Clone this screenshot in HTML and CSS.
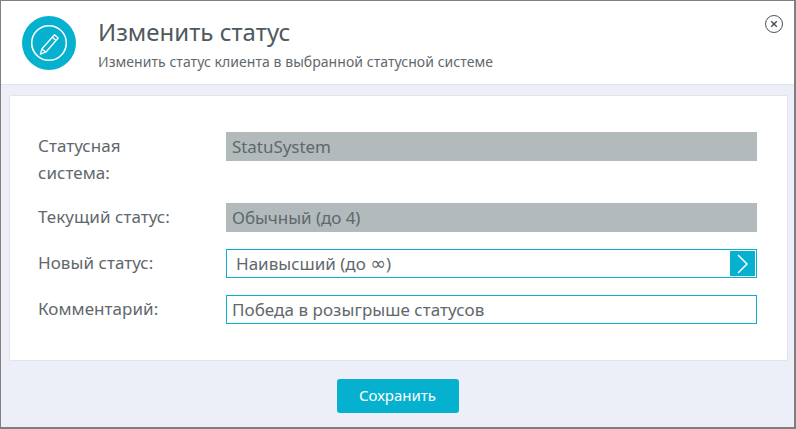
FILE: index.html
```html
<!DOCTYPE html>
<html lang="ru">
<head>
<meta charset="utf-8">
<title>Изменить статус</title>
<link rel="stylesheet" href="styles.css">
</head>
<body>
<div class="dialog">
  <header class="head">
    <div class="logo">
      <svg width="54" height="54" viewBox="0 0 54 54" fill="none" stroke="#fff">
        <circle cx="27" cy="27" r="17.3" stroke-width="1.6"/>
        <path d="M32.500 18.800l3.700 3.200-12.200 14-5.600 2.200 1.600-5.400z M30.300 21.300l3.700 3.200 M20 33l3.700 3" stroke-width="1.300" stroke-linejoin="round"/>
      </svg>
    </div>
    <div class="titles">
      <h1 class="title">Изменить статус</h1>
      <p class="subtitle">Изменить статус клиента в выбранной статусной системе</p>
    </div>
    <svg class="close" width="18" height="18" viewBox="0 0 18 18" fill="none" stroke="#4a5358">
      <circle cx="9" cy="9" r="8.500" stroke-width="1"/>
      <path d="M6.200 6.200l5.600 5.600M11.800 6.200l-5.600 5.600" stroke-width="1.500"/>
    </svg>
  </header>
  <main class="body">
    <section class="card">
      <div class="row">
        <div class="label">Статусная<br>система:</div>
        <div class="field readonly">StatuSystem</div>
      </div>
      <div class="row">
        <div class="label">Текущий статус:</div>
        <div class="field readonly">Обычный (до 4)</div>
      </div>
      <div class="row">
        <div class="label">Новый статус:</div>
        <div class="field select">
          <span>Наивысший (до <span class="inf">∞</span>)</span>
          <span class="arrow">
            <svg width="12" height="20" viewBox="0 0 12 20" fill="none" stroke="#fff" stroke-width="1.500"><path d="M1 1l9 9-9 9"/></svg>
          </span>
        </div>
      </div>
      <div class="row">
        <div class="label">Комментарий:</div>
        <div class="field input">Победа в розыгрыше статусов</div>
      </div>
    </section>
    <div class="actions"><button class="save">Сохранить</button></div>
  </main>
</div>
</body>
</html>
```
FILE: styles.css
```css
* { box-sizing: border-box; }
html, body { margin: 0; padding: 0; }
body { width: 796px; height: 429px; font-family: "Noto Sans", "Open Sans", sans-serif; color: #5a6367; background: #fff; }
.dialog { width: 796px; height: 429px; border: 1px solid #7f7f7f; border-width: 1px 2px 2px 1px; display: flex; flex-direction: column; background: #eceff7; }
.head { height: 84px; flex: none; background: #fff; border-bottom: 1px solid #e2e5ec; display: flex; padding: 15px 0 0 21px; position: relative; }
.logo { width: 54px; height: 54px; border-radius: 50%; background: #06b0cf; flex: none; }
.titles { margin-left: 22px; }
.title { margin: 0; font-size: 24px; line-height: 32px; font-weight: 400; color: #50595e; letter-spacing: 0; }
.subtitle { margin: 5px 0 0; font-size: 14px; line-height: 18px; color: #5f686c; letter-spacing: 0.05px; }
.close { position: absolute; top: 14px; right: 11px; }
.body { flex: 1; padding: 10px 8px 0; display: flex; flex-direction: column; }
.card { width: 779px; height: 266px; background: #fff; border: 1px solid #e2e4e9; border-radius: 2px; padding: 36px 30px 0 28px; }
.row { display: flex; margin-bottom: 17px; }
.label { width: 188px; flex: none; font-size: 17px; line-height: 27px; color: #5f686c; letter-spacing: 0.05px; }
.field { flex: 1; height: 29px; font-size: 17px; line-height: 29px; padding-left: 6px; color: #5f686c; letter-spacing: -0.05px; }
.readonly { background: #b2babc; }
.input, .select { border: 1px solid #06b0cf; background: #fff; line-height: 27px; padding-left: 5px; letter-spacing: 0.05px; }
.select { display: flex; justify-content: space-between; padding: 1px 1px 1px 9px; line-height: 25px; letter-spacing: 0; }
.inf { font-family: "DejaVu Sans", sans-serif; font-size: 19px; line-height: 1; }
.arrow { width: 25px; height: 25px; background: #06b0cf; display: flex; align-items: center; justify-content: center; }
.actions { display: flex; justify-content: center; padding-top: 18px; }
.save { width: 122px; height: 34px; border: 0; border-radius: 3px; background: #06b0cf; color: #fff; font-family: inherit; font-size: 15px; padding: 0 0 2px; }
```
